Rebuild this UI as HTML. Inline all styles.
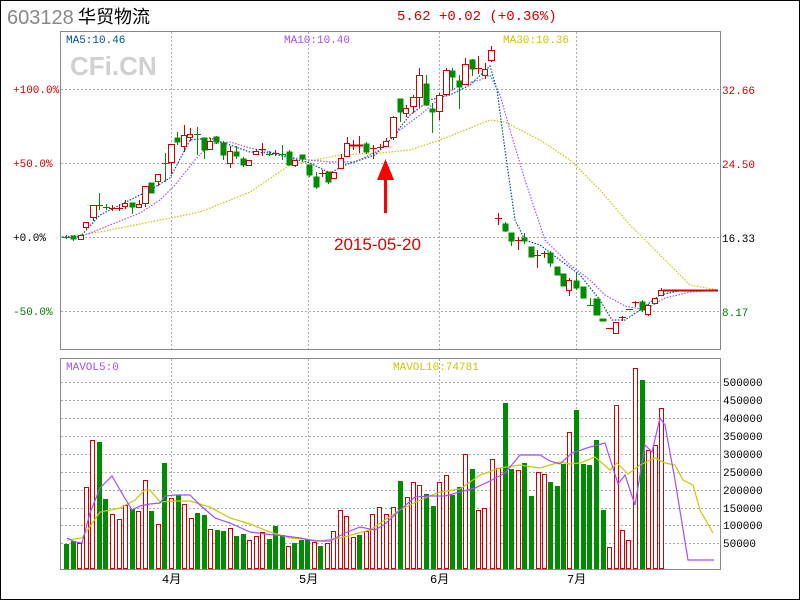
<!DOCTYPE html>
<html><head><meta charset="utf-8"><style>
html,body{margin:0;padding:0;background:#fff}
body{width:800px;height:600px;overflow:hidden;position:relative}
svg{position:absolute;left:0;top:0}
text{font-family:"Liberation Mono","Noto Sans CJK SC",monospace}
</style></head><body>
<svg width="800" height="600" viewBox="0 0 800 600" shape-rendering="crispEdges">
<rect x="0.5" y="0.5" width="799" height="599" fill="#fff" stroke="#000"/>
<text x="7" y="24" font-size="20" fill="#888" style="font-family:'Liberation Sans',sans-serif">603128</text>
<text x="78" y="23" font-size="18" fill="#000" style="font-family:'Liberation Sans','Noto Sans CJK SC',sans-serif">华贸物流</text>
<text x="397" y="20" font-size="14" fill="#d00000">5.62 +0.02 (+0.36%)</text>

<!-- main box -->
<rect x="60.5" y="31.5" width="660" height="318" fill="#fff" stroke="#888"/>
<g stroke="#aaa" stroke-dasharray="2,2" stroke-width="1">
<line x1="61" y1="89.5" x2="720" y2="89.5"/><line x1="61" y1="163.5" x2="720" y2="163.5"/>
<line x1="61" y1="237.5" x2="720" y2="237.5"/><line x1="61" y1="311.5" x2="720" y2="311.5"/>
<line x1="171.5" y1="32" x2="171.5" y2="349"/><line x1="308.5" y1="32" x2="308.5" y2="349"/>
<line x1="439.5" y1="32" x2="439.5" y2="349"/><line x1="576.5" y1="32" x2="576.5" y2="349"/>
</g>
<text x="70" y="75" font-size="26" font-weight="bold" fill="#d0d0d0" style="font-family:'Liberation Sans',sans-serif">CFi.CN</text>
<g font-size="11">
<text x="66" y="43" fill="#004f9f">MA5:10.46</text>
<text x="284" y="43" fill="#a050ff">MA10:10.40</text>
<text x="503" y="43" fill="#c8c800">MA30:10.36</text>
<text x="13" y="93" fill="#d00000">+100.0%</text>
<text x="13" y="167" fill="#d00000">+50.0%</text>
<text x="13" y="241" fill="#000">+0.0%</text>
<text x="13" y="315" fill="#008000">-50.0%</text>
<text x="722" y="94" fill="#d00000">32.66</text>
<text x="722" y="168" fill="#d00000">24.50</text>
<text x="722" y="242" fill="#000">16.33</text>
<text x="722" y="316" fill="#008000">8.17</text>
</g>

<!-- MAs -->
<g fill="none" stroke-width="1.2" stroke-dasharray="1.5,1.5" shape-rendering="auto">
<polyline stroke="#c8c800" points="62,237 100,232 150,222 200,212 250,192 290,165 340,155 380,153 410,150 440,140 470,128 490,120 505,122 540,140 570,160 600,190 630,225 660,255 690,285 718,290"/>
<polyline stroke="#a050ff" points="62,237 80,237 110,225 140,213 160,200 175,185 195,160 210,144 230,142 250,148 275,153 300,159 330,162 355,162 380,150 400,130 420,115 440,98 460,85 480,80 490,75 500,95 510,130 525,180 545,240 570,265 590,280 605,295 625,306 645,310 665,298 690,292 718,290"/>
<polyline stroke="#004f9f" points="62,237 80,237 100,215 120,205 150,190 170,178 190,140 210,138 230,145 250,152 270,153 290,158 310,163 330,173 345,165 360,160 375,155 390,140 410,115 430,100 450,95 470,85 490,66 497,90 505,150 515,220 525,240 540,245 560,260 580,275 600,300 612,320 625,320 640,310 660,295 683,290"/>
</g>

<!-- candles -->
<g stroke-width="1">
<g stroke="#d00000">
<line x1="663" y1="290.5" x2="718" y2="290.5" stroke-width="2"/>
</g>
<g id="c"></g>
</g>
<g>
<!-- green candles: wick + body -->
<g stroke="#008c00" fill="#008c00">
<line x1="66.5" y1="235" x2="66.5" y2="239"/><line x1="63" y1="237.5" x2="70" y2="237.5"/>
<line x1="73.5" y1="236" x2="73.5" y2="241"/><rect x="71" y="236" width="5" height="3"/>
<line x1="99.5" y1="193" x2="99.5" y2="210"/><line x1="96" y1="205.5" x2="103" y2="205.5"/>
<line x1="106.5" y1="204" x2="106.5" y2="210"/><line x1="103" y1="207.5" x2="110" y2="207.5"/>
<line x1="132.5" y1="203" x2="132.5" y2="214"/><rect x="130" y="203" width="5" height="4"/>
<line x1="151.5" y1="183" x2="151.5" y2="193"/><rect x="149" y="183" width="5" height="10"/>
<line x1="165.5" y1="153" x2="165.5" y2="182"/><line x1="162" y1="163.5" x2="169" y2="163.5"/>
<line x1="177.5" y1="132" x2="177.5" y2="145"/><rect x="175" y="138" width="5" height="4"/>
<line x1="197.5" y1="127" x2="197.5" y2="155"/><line x1="194" y1="134.5" x2="201" y2="134.5"/>
<line x1="204.5" y1="138" x2="204.5" y2="159"/><rect x="202" y="138" width="5" height="12"/>
<line x1="216.5" y1="136" x2="216.5" y2="144"/><rect x="214" y="137" width="5" height="5"/>
<line x1="223.5" y1="141" x2="223.5" y2="160"/><rect x="221" y="143" width="5" height="12"/>
<line x1="236.5" y1="146" x2="236.5" y2="159"/><rect x="234" y="152" width="5" height="4"/>
<line x1="243.5" y1="157" x2="243.5" y2="167"/><rect x="241" y="159" width="5" height="6"/>
<line x1="269.5" y1="151" x2="269.5" y2="156"/><line x1="266" y1="154.5" x2="273" y2="154.5"/>
<line x1="282.5" y1="145" x2="282.5" y2="160"/><line x1="279" y1="154.5" x2="286" y2="154.5"/>
<line x1="289.5" y1="150" x2="289.5" y2="165"/><rect x="287" y="152" width="5" height="13"/>
<line x1="302.5" y1="155" x2="302.5" y2="162"/><rect x="300" y="155" width="5" height="4"/>
<line x1="309.5" y1="165" x2="309.5" y2="177"/><rect x="307" y="165" width="5" height="10"/>
<line x1="316.5" y1="172" x2="316.5" y2="189"/><rect x="314" y="177" width="5" height="10"/>
<line x1="328.5" y1="172" x2="328.5" y2="184"/><rect x="326" y="172" width="5" height="10"/>
<line x1="366.5" y1="142" x2="366.5" y2="154"/><rect x="364" y="144" width="5" height="8"/>
<line x1="400.5" y1="99" x2="400.5" y2="122"/><rect x="398" y="99" width="5" height="13"/>
<line x1="426.5" y1="75" x2="426.5" y2="106"/><rect x="424" y="84" width="5" height="21"/>
<line x1="432.5" y1="103" x2="432.5" y2="133"/><rect x="430" y="109" width="5" height="3"/>
<line x1="452.5" y1="68" x2="452.5" y2="90"/><rect x="450" y="71" width="5" height="6"/>
<line x1="459.5" y1="75" x2="459.5" y2="109"/><rect x="457" y="81" width="5" height="6"/>
<line x1="472.5" y1="59" x2="472.5" y2="76"/><rect x="470" y="60" width="5" height="9"/>
<line x1="505.5" y1="222" x2="505.5" y2="232"/><rect x="503" y="224" width="5" height="7"/>
<line x1="511.5" y1="233" x2="511.5" y2="246"/><rect x="509" y="233" width="5" height="8"/>
<line x1="524.5" y1="233" x2="524.5" y2="244"/><rect x="522" y="238" width="5" height="3"/>
<line x1="531.5" y1="247" x2="531.5" y2="257"/><rect x="529" y="247" width="5" height="10"/>
<line x1="550.5" y1="251" x2="550.5" y2="267"/><rect x="548" y="253" width="5" height="10"/>
<line x1="557.5" y1="267" x2="557.5" y2="275"/><rect x="555" y="267" width="5" height="8"/>
<line x1="563.5" y1="274" x2="563.5" y2="286"/><rect x="561" y="274" width="5" height="12"/>
<line x1="576.5" y1="273" x2="576.5" y2="290"/><rect x="574" y="281" width="5" height="7"/>
<line x1="583.5" y1="287" x2="583.5" y2="298"/><rect x="581" y="287" width="5" height="11"/>
<line x1="590.5" y1="298" x2="590.5" y2="306"/><line x1="587" y1="305.5" x2="594" y2="305.5"/>
<line x1="596.5" y1="299" x2="596.5" y2="315"/><rect x="594" y="299" width="6" height="16"/>
<rect x="600" y="319" width="6" height="2"/>
<line x1="642.5" y1="300" x2="642.5" y2="312"/><rect x="640" y="302" width="5" height="8"/>
</g>
<!-- red candles -->
<g stroke="#d00000" fill="#fff">
<line x1="80.5" y1="235" x2="80.5" y2="240"/><rect x="78.5" y="235.5" width="5" height="4"/>
<line x1="86.5" y1="222" x2="86.5" y2="229"/><rect x="83.5" y="222.5" width="5" height="5"/>
<line x1="93.5" y1="205" x2="93.5" y2="221"/><rect x="90.5" y="205.5" width="6" height="12"/>
<line x1="112.5" y1="205" x2="112.5" y2="211"/><line x1="109" y1="208.5" x2="116" y2="208.5"/>
<line x1="119.5" y1="204" x2="119.5" y2="211"/><line x1="116" y1="208.5" x2="123" y2="208.5"/>
<line x1="125.5" y1="200" x2="125.5" y2="209"/><rect x="122.5" y="203.5" width="5" height="3"/>
<line x1="139.5" y1="200" x2="139.5" y2="207"/><rect x="136.5" y="204.5" width="5" height="3"/>
<line x1="145.5" y1="186" x2="145.5" y2="207"/><rect x="142.5" y="186.5" width="6" height="17"/>
<line x1="158.5" y1="174" x2="158.5" y2="186"/><rect x="155.5" y="174.5" width="5" height="7"/>
<line x1="171.5" y1="144" x2="171.5" y2="174"/><rect x="168.5" y="144.5" width="6" height="18"/>
<line x1="184.5" y1="125" x2="184.5" y2="152"/><rect x="181.5" y="135.5" width="5" height="11"/>
<line x1="190.5" y1="128" x2="190.5" y2="141"/><rect x="187.5" y="134.5" width="5" height="3"/>
<line x1="210.5" y1="138" x2="210.5" y2="149"/><rect x="207.5" y="141.5" width="5" height="8"/>
<line x1="230.5" y1="146" x2="230.5" y2="168"/><rect x="227.5" y="151.5" width="5" height="12"/>
<line x1="249.5" y1="160" x2="249.5" y2="166"/><rect x="246.5" y="160.5" width="5" height="5"/>
<line x1="256.5" y1="149" x2="256.5" y2="154"/><rect x="253.5" y="151.5" width="5" height="3"/>
<line x1="262.5" y1="143" x2="262.5" y2="156"/><line x1="259" y1="149.5" x2="266" y2="149.5"/>
<line x1="275.5" y1="150" x2="275.5" y2="156"/><line x1="272" y1="153.5" x2="279" y2="153.5"/>
<line x1="295.5" y1="160" x2="295.5" y2="167"/><rect x="292.5" y="160.5" width="5" height="5"/>
<line x1="322.5" y1="170" x2="322.5" y2="177"/><line x1="319" y1="173.5" x2="326" y2="173.5"/>
<line x1="334.5" y1="172" x2="334.5" y2="178"/><rect x="331.5" y="172.5" width="5" height="6"/>
<line x1="341.5" y1="154" x2="341.5" y2="168"/><rect x="338.5" y="158.5" width="5" height="10"/>
<line x1="347.5" y1="137" x2="347.5" y2="157"/><rect x="344.5" y="143.5" width="5" height="13"/>
<line x1="353.5" y1="140" x2="353.5" y2="150"/><line x1="350" y1="145.5" x2="357" y2="145.5" stroke-width="2"/>
<line x1="359.5" y1="136" x2="359.5" y2="153"/><line x1="356" y1="145.5" x2="363" y2="145.5" stroke-width="2"/>
<line x1="373.5" y1="145" x2="373.5" y2="159"/><line x1="370" y1="148.5" x2="377" y2="148.5"/>
<line x1="380.5" y1="144" x2="380.5" y2="150"/><line x1="377" y1="147.5" x2="384" y2="147.5"/>
<line x1="386.5" y1="138" x2="386.5" y2="146"/><rect x="383.5" y="141.5" width="5" height="5"/>
<line x1="393.5" y1="116" x2="393.5" y2="140"/><rect x="390.5" y="117.5" width="6" height="20"/>
<line x1="406.5" y1="105" x2="406.5" y2="117"/><rect x="403.5" y="108.5" width="5" height="5"/>
<line x1="413.5" y1="95" x2="413.5" y2="113"/><rect x="410.5" y="97.5" width="6" height="9"/>
<line x1="419.5" y1="68" x2="419.5" y2="107"/><rect x="416.5" y="75.5" width="6" height="22"/>
<line x1="439.5" y1="93" x2="439.5" y2="120"/><rect x="436.5" y="95.5" width="6" height="16"/>
<line x1="446.5" y1="68" x2="446.5" y2="96"/><rect x="443.5" y="70.5" width="6" height="24"/>
<line x1="465.5" y1="58" x2="465.5" y2="85"/><rect x="462.5" y="64.5" width="6" height="20"/>
<line x1="478.5" y1="56" x2="478.5" y2="74"/><line x1="475" y1="68.5" x2="482" y2="68.5"/>
<line x1="485.5" y1="63" x2="485.5" y2="79"/><rect x="482.5" y="69.5" width="5" height="6"/>
<line x1="491.5" y1="46" x2="491.5" y2="62"/><rect x="488.5" y="50.5" width="6" height="10"/>
<line x1="498.5" y1="213" x2="498.5" y2="225"/><line x1="495" y1="218.5" x2="502" y2="218.5"/>
<line x1="518.5" y1="237" x2="518.5" y2="250"/><line x1="515" y1="240.5" x2="522" y2="240.5"/>
<line x1="537.5" y1="250" x2="537.5" y2="268"/><line x1="534" y1="255.5" x2="541" y2="255.5"/>
<line x1="544.5" y1="251" x2="544.5" y2="258"/><line x1="541" y1="253.5" x2="548" y2="253.5"/>
<line x1="569.5" y1="278" x2="569.5" y2="296"/><rect x="566.5" y="280.5" width="5" height="10"/>
<line x1="606" y1="328.5" x2="614" y2="328.5"/>
<rect x="613.5" y="322.5" width="5" height="11"/>
<line x1="622.5" y1="316" x2="622.5" y2="321"/><line x1="619" y1="317.5" x2="626" y2="317.5"/>
<line x1="626" y1="309.5" x2="633" y2="309.5"/>
<line x1="635.5" y1="301" x2="635.5" y2="307"/><line x1="632" y1="302.5" x2="639" y2="302.5"/>
<line x1="648.5" y1="304" x2="648.5" y2="316"/><rect x="645.5" y="305.5" width="5" height="9"/>
<rect x="652.5" y="298.5" width="5" height="5"/>
<line x1="661.5" y1="288" x2="661.5" y2="292"/><rect x="658.5" y="290.5" width="5" height="5"/>
</g>
</g>

<!-- arrow -->
<g fill="#ff0000">
<rect x="384" y="175" width="3" height="38"/>
<polygon points="385.5,159 377,180 394,180"/>
</g>
<text x="334" y="250" font-size="17" fill="#e00000" style="font-family:'Liberation Sans',sans-serif">2015-05-20</text>

<!-- volume box -->
<rect x="60.5" y="358.5" width="660" height="211" fill="#fff" stroke="#888"/>
<g stroke="#aaa" stroke-dasharray="2,2">
<line x1="61" y1="382.5" x2="720" y2="382.5"/><line x1="61" y1="400.5" x2="720" y2="400.5"/>
<line x1="61" y1="418.5" x2="720" y2="418.5"/><line x1="61" y1="436.5" x2="720" y2="436.5"/>
<line x1="61" y1="454.5" x2="720" y2="454.5"/><line x1="61" y1="472.5" x2="720" y2="472.5"/>
<line x1="61" y1="490.5" x2="720" y2="490.5"/><line x1="61" y1="508.5" x2="720" y2="508.5"/>
<line x1="61" y1="525.5" x2="720" y2="525.5"/><line x1="61" y1="543.5" x2="720" y2="543.5"/>
<line x1="171.5" y1="359" x2="171.5" y2="569"/><line x1="308.5" y1="359" x2="308.5" y2="569"/>
<line x1="439.5" y1="359" x2="439.5" y2="569"/><line x1="576.5" y1="359" x2="576.5" y2="569"/>
</g>
<g font-size="11">
<text x="66" y="370" fill="#a050ff">MAVOL5:0</text>
<text x="393" y="370" fill="#c8c800">MAVOL10:74781</text>
<g fill="#000">
<text x="723" y="386">500000</text><text x="723" y="404">450000</text>
<text x="723" y="422">400000</text><text x="723" y="440">350000</text>
<text x="723" y="458">300000</text><text x="723" y="476">250000</text>
<text x="723" y="494">200000</text><text x="723" y="512">150000</text>
<text x="723" y="529">100000</text><text x="723" y="547">50000</text>
</g>
</g>
<g font-size="12" fill="#000" style="font-family:'Liberation Sans','Noto Sans CJK SC',sans-serif">
<text x="162" y="583">4月</text><text x="299" y="583">5月</text>
<text x="430" y="583">6月</text><text x="567" y="583">7月</text>
</g>

<!-- volume bars green -->
<g fill="#008c00">
<rect x="64" y="544" width="5" height="25"/><rect x="71" y="541" width="5" height="28"/>
<rect x="97" y="442" width="5" height="127"/><rect x="103" y="499" width="5" height="70"/>
<rect x="130" y="509" width="5" height="60"/><rect x="149" y="511" width="5" height="58"/>
<rect x="162" y="463" width="5" height="106"/><rect x="176" y="495" width="5" height="74"/>
<rect x="195" y="513" width="5" height="56"/><rect x="202" y="515" width="5" height="54"/>
<rect x="215" y="530" width="5" height="39"/><rect x="221" y="531" width="5" height="38"/>
<rect x="234" y="536" width="5" height="33"/><rect x="241" y="534" width="5" height="35"/>
<rect x="267" y="539" width="5" height="30"/><rect x="273" y="526" width="5" height="43"/>
<rect x="280" y="535" width="5" height="34"/><rect x="292" y="543" width="5" height="26"/>
<rect x="299" y="540" width="5" height="29"/><rect x="305" y="539" width="5" height="30"/>
<rect x="318" y="546" width="5" height="23"/><rect x="357" y="535" width="5" height="34"/>
<rect x="398" y="481" width="5" height="88"/><rect x="424" y="494" width="5" height="75"/>
<rect x="431" y="506" width="5" height="63"/><rect x="450" y="495" width="5" height="74"/>
<rect x="457" y="487" width="5" height="82"/><rect x="470" y="469" width="5" height="100"/>
<rect x="503" y="403" width="5" height="166"/><rect x="509" y="469" width="5" height="100"/>
<rect x="522" y="463" width="5" height="106"/><rect x="529" y="496" width="5" height="73"/>
<rect x="548" y="482" width="5" height="87"/><rect x="555" y="486" width="5" height="83"/>
<rect x="561" y="464" width="5" height="105"/><rect x="574" y="410" width="5" height="159"/>
<rect x="581" y="464" width="5" height="105"/><rect x="587" y="465" width="5" height="104"/>
<rect x="594" y="440" width="5" height="129"/><rect x="601" y="510" width="5" height="59"/>
<rect x="640" y="380" width="5" height="189"/>
</g>
<g fill="#fff" stroke="#d00000">
<rect x="77.5" y="543.5" width="4" height="25"/><rect x="84.5" y="487.5" width="4" height="81"/>
<rect x="90.5" y="440.5" width="4" height="128"/><rect x="110.5" y="514.5" width="4" height="54"/>
<rect x="117.5" y="519.5" width="4" height="49"/><rect x="123.5" y="505.5" width="4" height="63"/>
<rect x="136.5" y="511.5" width="4" height="57"/><rect x="143.5" y="480.5" width="4" height="88"/>
<rect x="156.5" y="524.5" width="4" height="44"/><rect x="169.5" y="498.5" width="4" height="70"/>
<rect x="182.5" y="504.5" width="4" height="64"/><rect x="189.5" y="518.5" width="4" height="50"/>
<rect x="208.5" y="529.5" width="4" height="39"/><rect x="228.5" y="528.5" width="4" height="40"/>
<rect x="247.5" y="540.5" width="4" height="28"/><rect x="254.5" y="536.5" width="4" height="32"/>
<rect x="260.5" y="532.5" width="4" height="36"/><rect x="286.5" y="546.5" width="4" height="22"/>
<rect x="312.5" y="542.5" width="4" height="26"/><rect x="325.5" y="543.5" width="4" height="25"/>
<rect x="331.5" y="531.5" width="4" height="37"/><rect x="338.5" y="510.5" width="4" height="58"/>
<rect x="344.5" y="516.5" width="4" height="52"/><rect x="351.5" y="537.5" width="4" height="31"/>
<rect x="364.5" y="531.5" width="4" height="37"/><rect x="370.5" y="514.5" width="4" height="54"/>
<rect x="377.5" y="507.5" width="4" height="61"/><rect x="384.5" y="514.5" width="4" height="54"/>
<rect x="391.5" y="507.5" width="4" height="61"/><rect x="405.5" y="497.5" width="4" height="71"/>
<rect x="411.5" y="482.5" width="4" height="86"/><rect x="417.5" y="485.5" width="4" height="83"/>
<rect x="437.5" y="482.5" width="4" height="86"/><rect x="444.5" y="475.5" width="4" height="93"/>
<rect x="463.5" y="454.5" width="4" height="114"/><rect x="476.5" y="510.5" width="4" height="58"/>
<rect x="482.5" y="508.5" width="4" height="60"/><rect x="490.5" y="459.5" width="4" height="109"/>
<rect x="496.5" y="468.5" width="4" height="100"/><rect x="516.5" y="470.5" width="4" height="98"/>
<rect x="536.5" y="472.5" width="4" height="96"/><rect x="542.5" y="474.5" width="4" height="94"/>
<rect x="567.5" y="432.5" width="4" height="136"/><rect x="607.5" y="547.5" width="4" height="21"/>
<rect x="614.5" y="405.5" width="4" height="163"/><rect x="620.5" y="530.5" width="4" height="38"/>
<rect x="626.5" y="540.5" width="4" height="28"/><rect x="633.5" y="368.5" width="4" height="200"/>
<rect x="646.5" y="450.5" width="4" height="118"/><rect x="653.5" y="445.5" width="4" height="123"/>
<rect x="659.5" y="408.5" width="4" height="160"/>
</g>
<g fill="none" stroke-width="1.2" shape-rendering="auto">
<polyline stroke="#c8c800" points="67,540 82,538 100,512 120,508 135,500 145,490 150,490 160,502 175,501 190,501 210,507 230,518 250,524 270,532 290,538 305,539 320,541 340,538 355,534 370,530 385,520 400,510 420,500 440,492 460,489 480,475 500,468 520,465 540,468 560,462 570,464 580,463 595,457 610,470 617,463 628,474 640,465 655,458 665,463 675,465 683,480 693,485 700,510 713,533"/>
<polyline stroke="#a050ff" points="67,538 75,542 82,543 90,513 100,488 112,476 120,490 132,510 140,506 150,504 160,503 165,496 175,495 190,495 200,505 215,518 230,523 250,532 265,534 285,536 300,538 315,541 330,541 345,533 360,527 375,530 385,524 400,510 415,497 430,496 445,496 460,492 475,488 490,481 505,473 520,455 530,455 540,455 550,461 560,464 572,453 590,447 605,443 618,484 625,475 635,505 645,445 652,452 660,418 665,425 675,480 688,560 714,560"/>
</g>
</svg>
</body></html>
